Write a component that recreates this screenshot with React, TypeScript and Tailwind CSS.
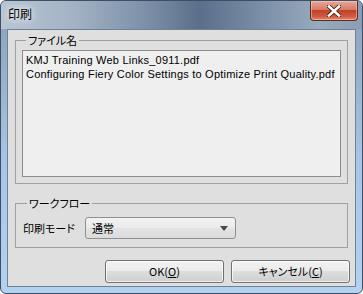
import React from "react";

const jp = "font-['Noto_Sans_CJK_JP',sans-serif] [font-feature-settings:'palt']";
const latin = "font-['Liberation_Sans','Noto_Sans_CJK_JP',sans-serif]";

const files = [
  "KMJ Training Web Links_0911.pdf",
  "Configuring Fiery Color Settings to Optimize Print Quality.pdf",
];

function CloseButton() {
  return (
    <div className="w-[48px] h-[20px] mr-[4px] rounded-b-[4px] border border-t-0 border-[#5e2a22] bg-[linear-gradient(180deg,#e9a99b_0%,#d87a66_45%,#c1412a_50%,#cf5a3e_80%,#e38a68_100%)] flex items-center justify-center shadow-[inset_0_0_0_1px_rgba(255,220,210,0.45)]">
      <svg width="14" height="12" viewBox="0 0 14 12">
        <path d="M2 1.5 L12 10.5 M12 1.5 L2 10.5" stroke="#3b1a15" strokeWidth="4.2" strokeLinecap="square" />
        <path d="M2 1.5 L12 10.5 M12 1.5 L2 10.5" stroke="#ffffff" strokeWidth="2.6" strokeLinecap="square" />
      </svg>
    </div>
  );
}

function Win7Button({ label, accel }: { label: string; accel: string }) {
  return (
    <button
      type="button"
      className={`w-[119px] h-[23px] rounded-[3px] border border-[#707070] bg-[linear-gradient(180deg,#f2f2f2_0%,#ebebeb_49%,#dddddd_50%,#cfcfcf_100%)] shadow-[inset_0_0_0_1px_rgba(255,255,255,0.7)] text-[11px] leading-none text-black ${jp}`}
    >
      {label}(<span className="underline">{accel}</span>)
    </button>
  );
}

export default function App() {
  return (
    <div className="w-[363px] h-[294px] flex flex-col rounded-[6px] border border-[#3e4f65] bg-[linear-gradient(180deg,#8da0b6_0%,#98b0cb_25%,#a9c5e6_55%,#b5d1f0_100%)] overflow-hidden">
      <div className="h-[28px] flex items-start justify-between bg-[linear-gradient(90deg,#b8c5d3_0%,#a3b3c5_20%,#7d90a8_40%,#5b6f8a_55%,#7a8ea8_72%,#98aabd_88%,#8b9db2_100%)]">
        <span className={`pl-[7px] pt-[6px] text-[12px] leading-[14px] text-black [text-shadow:0_0_6px_#fff,0_0_10px_rgba(255,255,255,0.8)] ${jp}`}>
          印刷
        </span>
        <CloseButton />
      </div>
      <div className="mx-[6px] mb-[6px] flex-1 border border-[#6f8197] bg-[#dfdfdf] flex flex-col pt-[3px] pl-[7px] pr-[5px]">
        <fieldset className="w-[333px] h-[151px] border border-[#a0a0a0] px-[6px] pb-[6px]">
          <legend className={`ml-[4px] px-[2px] text-[11px] leading-[14px] text-black ${jp}`}>ファイル名</legend>
          <div className="mt-[3px] h-[127px] border border-[#8c8c8c] bg-[#efefef] pt-[2px] pl-[3px]">
            {files.map((f) => (
              <div key={f} className={`h-[14px] text-[11px] leading-[14px] text-black tracking-[0.22px] whitespace-nowrap ${latin}`}>
                {f}
              </div>
            ))}
          </div>
        </fieldset>
        <fieldset className="mt-[12px] w-[333px] h-[52px] border border-[#a0a0a0] px-[7px] pb-[7px]">
          <legend className={`ml-[4px] px-[2px] text-[11px] leading-[14px] text-black ${jp}`}>ワークフロー</legend>
          <div className="mt-[7px] flex items-center">
            <span className={`w-[62px] text-[11px] leading-[14px] text-black ${jp}`}>印刷モード</span>
            <div className="w-[151px] h-[22px] rounded-[3px] border border-[#8e8f8f] bg-[linear-gradient(180deg,#f2f2f2_0%,#ebebeb_49%,#e3e3e3_50%,#dcdcdc_100%)] flex items-center justify-between pl-[6px] pr-[7px]">
              <span className={`text-[11px] leading-[14px] text-black ${jp}`}>通常</span>
              <svg width="8" height="5" viewBox="0 0 8 5">
                <path d="M0 0 H8 L4 5 Z" fill="#4a4a4a" />
              </svg>
            </div>
          </div>
        </fieldset>
        <div className="mt-[12px] flex justify-end gap-[7px]">
          <Win7Button label="OK" accel="O" />
          <Win7Button label="キャンセル" accel="C" />
        </div>
      </div>
    </div>
  );
}
